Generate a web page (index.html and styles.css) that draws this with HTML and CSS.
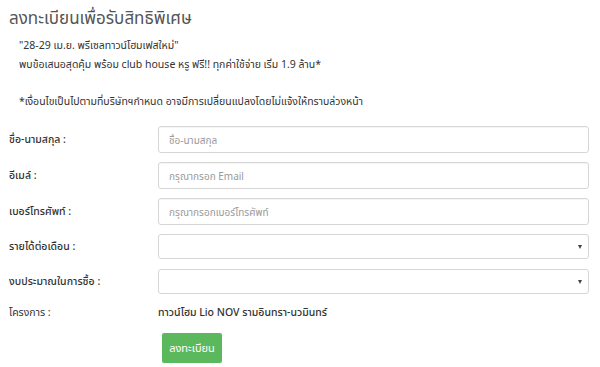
FILE: index.html
```html
<!DOCTYPE html>
<html lang="th">
<head>
    <meta charset="UTF-8">
    <link rel="stylesheet" href="styles.css">
    <title>ลงทะเบียน</title>
</head>
<body>
    <div class="register">
        <h2 class="title">ลงทะเบียนเพื่อรับสิทธิพิเศษ</h2>
        <div class="promo">
            <p>"28-29 เม.ย. พรีเซลทาวน์โฮมเฟสใหม่"</p>
            <p>พบข้อเสนอสุดคุ้ม พร้อม club house หรู ฟรี!! ทุกค่าใช้จ่าย เริ่ม 1.9 ล้าน*</p>
            <p class="blank">&nbsp;</p>
            <p>*เงื่อนไขเป็นไปตามที่บริษัทฯกำหนด อาจมีการเปลี่ยนแปลงโดยไม่แจ้งให้ทราบล่วงหน้า</p>
        </div>

        <form class="form">
            <div class="row">
                <label for="name">ชื่อ-นามสกุล :</label>
                <input type="text" id="name" placeholder="ชื่อ-นามสกุล">
            </div>
            <div class="row">
                <label for="email">อีเมล์ :</label>
                <input type="text" id="email" placeholder="กรุณากรอก Email">
            </div>
            <div class="row">
                <label for="tel">เบอร์โทรศัพท์ :</label>
                <input type="text" id="tel" placeholder="กรุณากรอกเบอร์โทรศัพท์">
            </div>
            <div class="row row-select">
                <label for="income">รายได้ต่อเดือน :</label>
                <div class="select">
                    <select id="income"><option></option></select>
                </div>
            </div>
            <div class="row row-select">
                <label for="budget">งบประมาณในการซื้อ :</label>
                <div class="select">
                    <select id="budget"><option></option></select>
                </div>
            </div>
            <div class="row row-text">
                <label>โครงการ :</label>
                <span class="project">ทาวน์โฮม Lio NOV รามอินทรา-นวมินทร์</span>
            </div>
            <div class="actions">
                <button type="button" class="btn">ลงทะเบียน</button>
            </div>
        </form>
    </div>
</body>
</html>
```

FILE: styles.css
```css
body {
    margin: 0;
    background: #fff;
    font-family: "Noto Sans", "Noto Sans Thai", sans-serif;
    color: #333;
}

.register {
    padding: 4px 9px 0 9px;
    width: 580px;
}

.title {
    margin: 0;
    font-size: 17px;
    font-weight: normal;
    color: #555;
    line-height: 28px;
}

.promo {
    padding: 4px 0 0 10px;
}

.promo p {
    margin: 0;
    font-size: 10.5px;
    line-height: 18.5px;
    color: #333;
}

.form {
    margin-top: 16px;
}

.row {
    display: flex;
    align-items: center;
    margin-bottom: 9px;
}

.row label {
    width: 149px;
    flex: none;
    font-size: 10.5px;
    font-weight: 500;
    color: #333;
}

.row input {
    width: 431px;
    height: 27px;
    box-sizing: border-box;
    border: 1px solid #d6d6d6;
    border-radius: 3px;
    padding: 0 10px;
    font-family: inherit;
    font-size: 10px;
    color: #555;
    box-shadow: inset 0 1px 1px rgba(0, 0, 0, 0.04);
}

.row input::placeholder {
    color: #9a9a9a;
}

.row-select {
    margin-bottom: 10px;
}

.select {
    position: relative;
    width: 431px;
}

.select select {
    width: 100%;
    height: 25px;
    box-sizing: border-box;
    border: 1px solid #d6d6d6;
    border-radius: 3px;
    background: #fff;
    appearance: none;
    -webkit-appearance: none;
}

.select::after {
    content: "";
    position: absolute;
    right: 7px;
    top: 11px;
    border-left: 2.5px solid transparent;
    border-right: 2.5px solid transparent;
    border-top: 4px solid #444;
}

.row-text {
    height: 18px;
    margin-top: 0;
    margin-bottom: 0;
}

.row-text label {
    font-weight: normal;
}

.project {
    font-size: 10.5px;
    font-weight: 500;
    color: #333;
}

.actions {
    padding: 11px 0 0 153px;
}

.btn {
    width: 60px;
    height: 30px;
    border: none;
    border-radius: 2px;
    background-color: #5cb85c;
    color: #fff;
    font-family: inherit;
    font-size: 11px;
    padding: 0;
}
```
